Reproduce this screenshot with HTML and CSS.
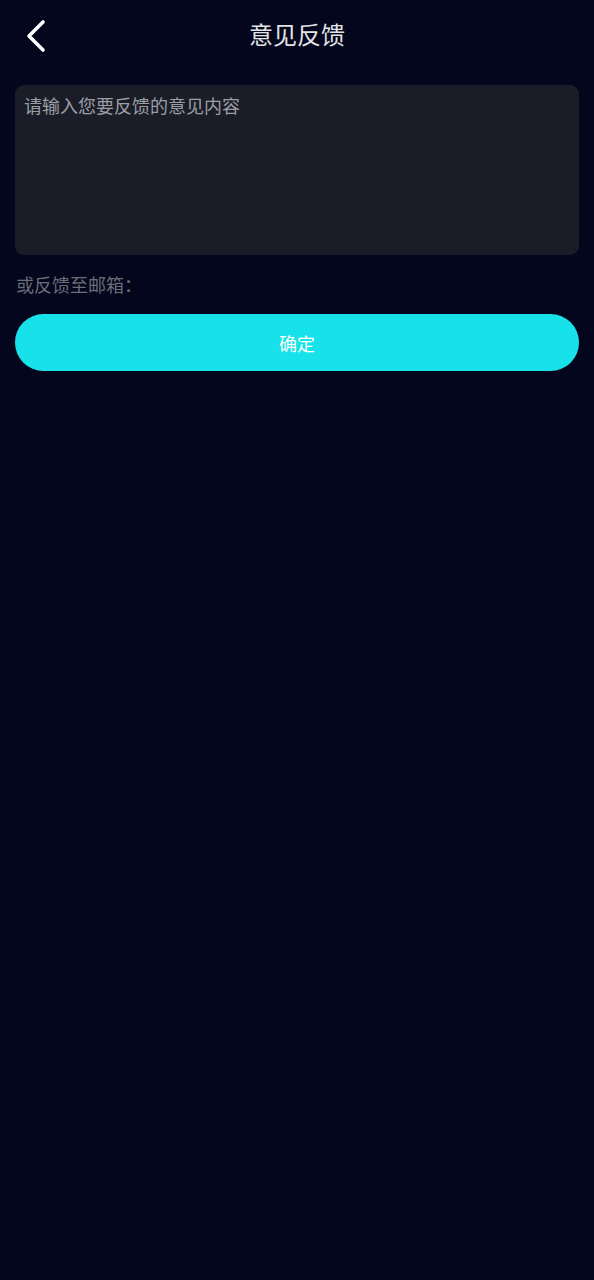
FILE: index.html
```html
<!DOCTYPE html>
<html lang="zh">
<head>
<meta charset="utf-8">
<title>意见反馈</title>
<link rel="stylesheet" href="styles.css">
</head>
<body>
<div class="page">
  <header class="topbar">
    <span class="back">
      <svg width="24" height="34" viewBox="0 0 24 34"><path d="M18 3 L4 17 L18 31" fill="none" stroke="#ffffff" stroke-width="3.6" stroke-linecap="round" stroke-linejoin="round"/></svg>
    </span>
    <h1 class="title">意见反馈</h1>
  </header>
  <div class="inputbox">
    <div class="placeholder">请输入您要反馈的意见内容</div>
  </div>
  <p class="email">或反馈至邮箱：</p>
  <button class="submit">确定</button>
</div>
</body>
</html>
```

FILE: styles.css
```css
html, body {
  margin: 0;
  padding: 0;
  background: #03061c;
  font-family: "Noto Sans CJK SC", "Noto Sans", sans-serif;
}
.page {
  width: 594px;
  min-height: 1280px;
  box-sizing: border-box;
  padding: 0 15px;
  display: flex;
  flex-direction: column;
}
.topbar {
  position: relative;
  height: 72px;
  box-sizing: border-box;
  padding-bottom: 4px;
  display: flex;
  align-items: center;
  justify-content: center;
}
.back {
  position: absolute;
  left: 10px;
  top: 19px;
  display: flex;
}
.title {
  margin: 0;
  font-size: 24px;
  font-weight: 400;
  color: #e2e3e6;
  line-height: 1;
}
.inputbox {
  margin-top: 13px;
  height: 170px;
  background: #1a1d27;
  border-radius: 9px;
  padding: 7px 9px;
  box-sizing: border-box;
}
.placeholder {
  font-size: 18px;
  color: #9c9ea6;
  line-height: 26px;
}
.email {
  margin: 16px 0 0 1px;
  font-size: 18px;
  color: #6b6d78;
  line-height: 26px;
}
.submit {
  margin-top: 17px;
  height: 57px;
  width: 100%;
  border: none;
  border-radius: 29px;
  background: #18e2e9;
  color: #ffffff;
  font-family: "Noto Sans CJK SC", "Noto Sans", sans-serif;
  font-size: 18px;
  padding: 0;
}
```
